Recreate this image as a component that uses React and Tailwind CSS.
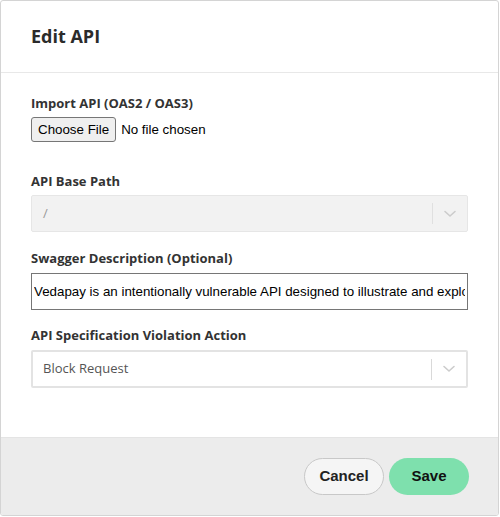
import React from 'react';

function Chevron() {
    return (
        <svg width="14" height="8" viewBox="0 0 14 8" fill="none" stroke="#cccccc" strokeWidth="1.6" strokeLinecap="round" strokeLinejoin="round">
            <polyline points="2,1.5 7,6 12,1.5" />
        </svg>
    );
}

function SelectBox({ value, disabled }) {
    return (
        <div
            className={
                disabled
                    ? 'flex h-[37px] items-center border border-[#e6e6e6] bg-[#f2f2f2] rounded-[2px]'
                    : 'flex h-[38px] items-center border-2 border-[#e3e3e3] bg-white rounded-[2px]'
            }
        >
            <div className={disabled ? 'flex-1 pl-[11px] text-[13px] text-[#999999]' : 'flex-1 pl-[10px] text-[13px] text-[#555555]'}>
                {value}
            </div>
            <span className={disabled ? 'w-px h-[21px] bg-[#e0e0e0]' : 'w-px h-[21px] bg-[#d9d9d9]'} />
            <div className="w-[34px] flex items-center justify-center">
                <Chevron />
            </div>
        </div>
    );
}

export default function App() {
    return (
        <div className="w-[499px] h-[516px] flex flex-col bg-white border border-[#d4d4d4] rounded-[3px] overflow-hidden font-['Open_Sans',sans-serif] text-[#333333]">
            <div className="h-[72px] shrink-0 flex items-center px-[30px] border-b border-[#e8e8e8]">
                <h2 className="text-[18px] font-bold text-[#2b2b2b]">Edit API</h2>
            </div>

            <div className="flex-1 px-[30px] pt-[21px]">
                <label className="block text-[13px] leading-[18px] font-bold mb-[5px]">Import API (OAS2 / OAS3)</label>
                <input
                    type="file"
                    className="block h-[25px] text-[13.33px] text-black font-['Liberation_Sans',Arial,sans-serif] file:h-[25px] file:px-[6px] file:mr-[5px] file:bg-[#efefef] file:border file:border-[#767676] file:rounded-[3px] file:text-black file:text-[13.33px]"
                />

                <label className="block text-[13px] leading-[18px] font-bold mt-[30px] mb-[5px]">API Base Path</label>
                <SelectBox value="/" disabled />

                <label className="block text-[13px] leading-[18px] font-bold mt-[17px] mb-[6px]">Swagger Description (Optional)</label>
                <input
                    type="text"
                    readOnly
                    value="Vedapay is an intentionally vulnerable API designed to illustrate and explore common API security issues."
                    className="block w-[437px] h-[37px] px-[2px] border border-[#767676] bg-white text-[13.33px] text-black font-['Liberation_Sans',Arial,sans-serif] outline-none"
                />

                <label className="block text-[13px] leading-[18px] font-bold mt-[16px] mb-[6px]">API Specification Violation Action</label>
                <SelectBox value="Block Request" />
            </div>

            <div className="h-[78px] shrink-0 flex items-center justify-end gap-[5px] pl-[30px] pr-[29px] bg-[#ececec] border-t border-[#e4e4e4]">
                <button className="w-[80px] h-[37px] rounded-full border border-[#c8c8c8] bg-[#f5f5f5] text-[15px] font-bold text-[#222222] font-['Liberation_Sans',Arial,sans-serif]">
                    Cancel
                </button>
                <button className="w-[80px] h-[37px] rounded-full bg-[#7ee0ad] text-[15px] font-bold text-[#111111] font-['Liberation_Sans',Arial,sans-serif]">
                    Save
                </button>
            </div>
        </div>
    );
}
